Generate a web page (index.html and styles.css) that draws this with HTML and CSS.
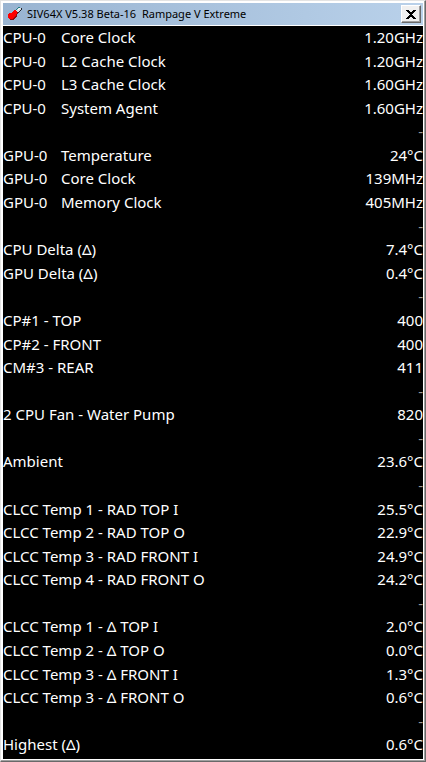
FILE: index.html
```html
<!DOCTYPE html>
<html lang="en">
<head>
    <meta charset="UTF-8">
    <meta name="viewport" content="width=device-width, initial-scale=1.0">
    <title>SIV64X V5.38 Beta-16  Rampage V Extreme</title>
    <link rel="stylesheet" href="styles.css">
</head>
<body>
    <main class="window">
        <header class="title-bar">
            <svg class="app-icon" width="16" height="16" viewBox="0 0 16 16" shape-rendering="crispEdges" aria-hidden="true">
                <path d="M11 1h2v1h1v2h-1v1h-1v1h-1v1h-1V6H9V5H8V4h1V3h1V2h1z" fill="#d8dce0"/>
                <path d="M11 1h2v1h-2zM10 2h1v1h-1zM9 3h1v1H9z" fill="#1e7f86"/>
                <path d="M14 2h1v2h-1v1h-1v1h-1v1h-1V6h1V5h1V4h1z" fill="#20242c"/>
                <path d="M12 2h1v1h-1zM11 3h1v1h-1z" fill="#fff"/>
                <path d="M7 4h2v1h1v1h1v1h-1v1H9v3H8v1H7v1H6v1H3v-1H2v-1H1V8h1V7h3V6h1V5h1z" fill="#f00"/>
                <path d="M11 6v2h-1v3H9v1H8v1H7v1H3v-1h3v-1h1v-1h1v-1h1V8h1V6z" fill="#8b0d12"/>
            </svg>
            <h1 class="title">SIV64X V5.38 Beta-16&nbsp; Rampage V Extreme</h1>
            <button class="close-button" type="button" aria-label="Close">
                <svg width="10" height="9" viewBox="0 0 10 9" shape-rendering="crispEdges" aria-hidden="true">
                    <path d="M0 0h3v1h1v1h2V1h1V0h3v1H9v1H8v1H7v1H6v1h1v1h1v1h1v1h1v1H7V8H6V7H4v1H3v1H0V8h1V7h1V6h1V5h1V4H3V3H2V2H1V1H0z" fill="#000"/>
                </svg>
            </button>
        </header>

        <table class="readings">
            <tbody>
                <tr><th scope="row"><span class="device">CPU-0</span>Core Clock</th><td>1.20GHz</td></tr>
                <tr><th scope="row"><span class="device">CPU-0</span>L2 Cache Clock</th><td>1.20GHz</td></tr>
                <tr><th scope="row"><span class="device">CPU-0</span>L3 Cache Clock</th><td>1.60GHz</td></tr>
                <tr><th scope="row"><span class="device">CPU-0</span>System Agent</th><td>1.60GHz</td></tr>
                <tr class="spacer"><td></td><td>-</td></tr>
                <tr><th scope="row"><span class="device">GPU-0</span>Temperature</th><td>24°C</td></tr>
                <tr><th scope="row"><span class="device">GPU-0</span>Core Clock</th><td>139MHz</td></tr>
                <tr><th scope="row"><span class="device">GPU-0</span>Memory Clock</th><td>405MHz</td></tr>
                <tr class="spacer"><td></td><td>-</td></tr>
                <tr><th scope="row">CPU Delta (Δ)</th><td>7.4°C</td></tr>
                <tr><th scope="row">GPU Delta (Δ)</th><td>0.4°C</td></tr>
                <tr class="spacer"><td></td><td>-</td></tr>
                <tr><th scope="row">CP#1 - TOP</th><td>400</td></tr>
                <tr><th scope="row">CP#2 - FRONT</th><td>400</td></tr>
                <tr><th scope="row">CM#3 - REAR</th><td>411</td></tr>
                <tr class="spacer"><td></td><td>-</td></tr>
                <tr><th scope="row">2 CPU Fan - Water Pump</th><td>820</td></tr>
                <tr class="spacer"><td></td><td>-</td></tr>
                <tr><th scope="row">Ambient</th><td>23.6°C</td></tr>
                <tr class="spacer"><td></td><td>-</td></tr>
                <tr><th scope="row">CLCC Temp 1 - RAD TOP I</th><td>25.5°C</td></tr>
                <tr><th scope="row">CLCC Temp 2 - RAD TOP O</th><td>22.9°C</td></tr>
                <tr><th scope="row">CLCC Temp 3 - RAD FRONT I</th><td>24.9°C</td></tr>
                <tr><th scope="row">CLCC Temp 4 - RAD FRONT O</th><td>24.2°C</td></tr>
                <tr class="spacer"><td></td><td>-</td></tr>
                <tr><th scope="row">CLCC Temp 1 - Δ TOP I</th><td>2.0°C</td></tr>
                <tr><th scope="row">CLCC Temp 2 - Δ TOP O</th><td>0.0°C</td></tr>
                <tr><th scope="row">CLCC Temp 3 - Δ FRONT I</th><td>1.3°C</td></tr>
                <tr><th scope="row">CLCC Temp 3 - Δ FRONT O</th><td>0.6°C</td></tr>
                <tr class="spacer"><td></td><td>-</td></tr>
                <tr><th scope="row">Highest (Δ)</th><td>0.6°C</td></tr>
            </tbody>
        </table>
    </main>
</body>
</html>
```
FILE: styles.css
```css
* {
    box-sizing: border-box;
}
body {
    margin: 0;
    background: #000;
    font-family: "Noto Sans", "Open Sans", sans-serif;
}
/* Raised window frame: light on the top left, dark on the bottom right */
.window {
    display: flex;
    flex-direction: column;
    min-height: 100vh;
    padding: 1px;
    border: 1px solid;
    border-color: #e3e3e3 #696969 #696969 #e3e3e3;
    background: #fff;
    box-shadow: inset -1px -1px #a0a0a0;
}
.title-bar {
    display: flex;
    align-items: center;
    height: 22px;
    margin: 1px;
    padding: 0 2px 0 4px;
    background: linear-gradient(to right, #99b4d1, #b9d1ea);
}
.app-icon {
    margin-right: 4px;
}
.title {
    flex: 1;
    margin: 0;
    font-size: 11px;
    font-weight: 400;
    line-height: 16px;
    color: #000;
}
.close-button {
    display: flex;
    align-items: center;
    justify-content: center;
    width: 20px;
    height: 18px;
    padding: 0;
    border: 1px solid;
    border-color: #fff #696969 #696969 #fff;
    background: #f0f0f0;
    box-shadow: inset -1px -1px #a0a0a0;
}
.readings {
    flex: 1;
    margin: 0 1px 1px;
    padding-bottom: 2px;
    border-spacing: 0;
    background: #000;
    color: #fff;
    font-size: 15px;
    line-height: 22px;
}
.readings th,
.readings td {
    padding: 0;
    font-weight: 400;
    text-align: left;
    vertical-align: top;
    white-space: nowrap;
}
.readings td {
    text-align: right;
}
.device {
    display: inline-block;
    width: 58px;
}
.readings .spacer {
    color: #999;
}
```
